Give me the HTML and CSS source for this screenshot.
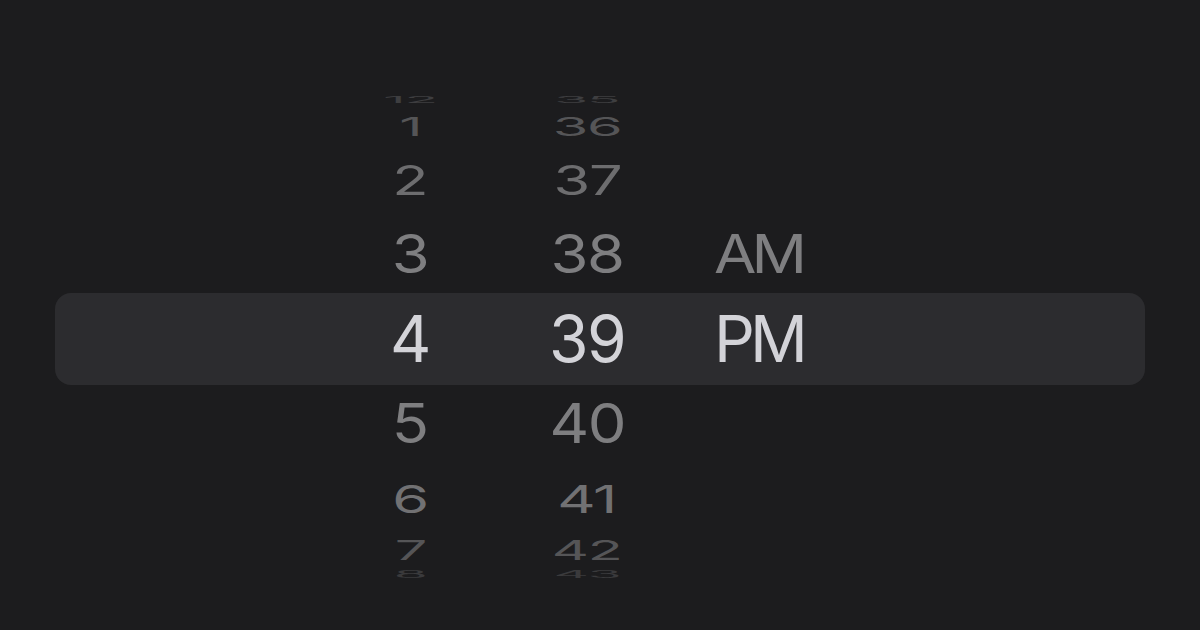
FILE: index.html
```html
<!DOCTYPE html>
<html lang="en">
<head>
<meta charset="utf-8">
<title>Time picker</title>
<link rel="stylesheet" href="styles.css">
</head>
<body>
<main class="wheel">
  <div class="row d-4"><span class="cell"><span class="t">12</span></span><span class="cell"><span class="t">35</span></span><span class="cell ap"></span></div>
  <div class="row d-3"><span class="cell"><span class="t">1</span></span><span class="cell"><span class="t">36</span></span><span class="cell ap"></span></div>
  <div class="row d-2"><span class="cell"><span class="t">2</span></span><span class="cell"><span class="t">37</span></span><span class="cell ap"></span></div>
  <div class="row d-1"><span class="cell"><span class="t">3</span></span><span class="cell"><span class="t">38</span></span><span class="cell ap"><span class="t">AM</span></span></div>
  <div class="row sel"><span class="cell"><span class="t">4</span></span><span class="cell"><span class="t">39</span></span><span class="cell ap"><span class="t">PM</span></span></div>
  <div class="row d1"><span class="cell"><span class="t">5</span></span><span class="cell"><span class="t">40</span></span><span class="cell ap"></span></div>
  <div class="row d2"><span class="cell"><span class="t">6</span></span><span class="cell"><span class="t">41</span></span><span class="cell ap"></span></div>
  <div class="row d3"><span class="cell"><span class="t">7</span></span><span class="cell"><span class="t">42</span></span><span class="cell ap"></span></div>
  <div class="row d4"><span class="cell"><span class="t">8</span></span><span class="cell"><span class="t">43</span></span><span class="cell ap"></span></div>
</main>
</body>
</html>
```
FILE: styles.css
```css
html, body {
  margin: 0;
  padding: 0;
  background: #1c1c1e;
}
body {
  width: 1200px;
  height: 630px;
  overflow: hidden;
  font-family: Inter, "Liberation Sans", sans-serif;
}
.wheel {
  display: block;
  padding-top: 92px;
}
.row {
  margin: 0 55px;
  padding-left: 305px;
  display: grid;
  grid-template-columns: 100px 100px 1fr;
  grid-template-rows: minmax(0, 1fr);
  column-gap: 77px;
  font-size: 64px;
  line-height: 1;
  letter-spacing: -1.5px;
  color: #7e7e80;
}
.cell {
  display: flex;
  justify-content: center;
  align-items: center;
  min-height: 0;
}
.cell.ap {
  justify-content: flex-start;
  letter-spacing: -5px;
}
.t {
  display: inline-block;
  white-space: nowrap;
}
.ap .t { transform-origin: left center; }

.sel {
  height: 92px;
  background: #2c2c2f;
  border-radius: 16px;
  color: #d3d3d8;
}
.d-4 { height: 16px; color: #3e3e40; }
.d-3 { height: 38px; color: #555557; }
.d-2 { height: 68px; color: #6d6d6f; }
.d-1 { height: 79px; color: #7e7e80; }
.d1 { height: 76px; color: #7e7e80; }
.d2 { height: 76px; color: #717173; }
.d3 { height: 26px; color: #555557; }
.d4 { height: 24px; color: #3a3a3c; }

.d-4 .t { transform: scale(0.86, 0.13); }
.d-3 .t { transform: scale(0.9, 0.4); }
.d-2 .t { transform: scale(0.93, 0.64); }
.d-1 .t { transform: scale(0.96, 0.84); }
.d1 .t { transform: scale(0.96, 0.85); }
.d2 .t { transform: scale(0.93, 0.6); }
.d3 .t { transform: scale(0.9, 0.43); }
.d4 .t { transform: scale(0.86, 0.15); }
```
